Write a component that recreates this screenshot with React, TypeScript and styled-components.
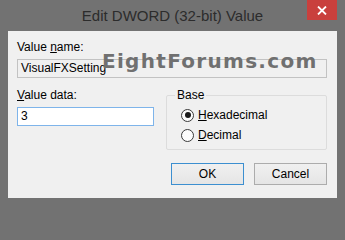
import * as React from "react";
import styled, { createGlobalStyle } from "styled-components";

const GlobalStyle = createGlobalStyle`
  html, body {
    margin: 0;
    padding: 0;
    background: #727272;
  }
  body {
    font-family: "Liberation Sans", Arial, sans-serif;
  }
`;

const App: React.FunctionComponent = () => {
  return <Window>
      <GlobalStyle />
      <TitleBar>
        <span />
        <Title>Edit DWORD (32-bit) Value</Title>
        <CloseButton>
          <svg width="10" height="9" viewBox="0 0 10 9">
            <path d="M1 0.5 L9 8.5 M9 0.5 L1 8.5" stroke="#fff" strokeWidth="1.8" />
          </svg>
        </CloseButton>
      </TitleBar>
      <Content>
        <Label>Value <u>n</u>ame:</Label>
        <TextBox readOnly>VisualFXSetting</TextBox>
        <LowerRow>
          <DataColumn>
            <Label><u>V</u>alue data:</Label>
            <TextBox focused>3</TextBox>
          </DataColumn>
          <GroupBox>
            <Legend>Base</Legend>
            <RadioRow>
              <RadioCircle checked />
              <span><u>H</u>exadecimal</span>
            </RadioRow>
            <RadioRow>
              <RadioCircle />
              <span><u>D</u>ecimal</span>
            </RadioRow>
          </GroupBox>
        </LowerRow>
        <ButtonBar>
          <Button isDefault>OK</Button>
          <Button>Cancel</Button>
        </ButtonBar>
      </Content>
      <Watermark>EightForums.com</Watermark>
    </Window>;
};

const Window = styled.div`
  position: relative;
  width: 345px;
  height: 206px;
  background: #727272;
  display: flex;
  flex-direction: column;
  overflow: hidden;
`;

const TitleBar = styled.div`
  height: 31px;
  display: grid;
  grid-template-columns: 1fr auto 1fr;
  padding-right: 8px;
`;

const Title = styled.div`
  align-self: center;
  font-size: 15px;
  color: #2c2c2c;
  margin-left: 8px;
`;

const CloseButton = styled.div`
  justify-self: end;
  width: 30px;
  height: 20px;
  background: #c9403d;
  display: flex;
  align-items: center;
  justify-content: center;
`;

const Content = styled.div`
  margin: 0 8px;
  height: 167px;
  box-sizing: border-box;
  background: #f0f0f0;
  padding: 9px 10px 0 9px;
  display: flex;
  flex-direction: column;
  font-size: 12px;
  color: #000;
`;

const Label = styled.div`
  line-height: 15px;
  height: 15px;
  margin-bottom: 4px;
`;

const TextBox = styled.div<{readOnly?: boolean; focused?: boolean}>`
  height: 19px;
  box-sizing: border-box;
  border: 1px solid ${p => p.focused ? "#7eb4ea" : "#c2c2c2"};
  background: ${p => p.readOnly ? "#f0f0f0" : "#ffffff"};
  padding: 0 3px;
  line-height: 17px;
`;

const LowerRow = styled.div`
  display: grid;
  grid-template-columns: 137px 161px;
  column-gap: 12px;
  margin-top: 10px;
  height: 62px;
`;

const DataColumn = styled.div`
  display: flex;
  flex-direction: column;
`;

const GroupBox = styled.fieldset`
  margin: 0;
  padding: 2px 8px 0 14px;
  border: 1px solid #dcdcdc;
  border-radius: 2px;
  min-width: 0;
  box-sizing: border-box;
  height: 62px;
`;

const Legend = styled.legend`
  padding: 0 2px;
  margin-left: -6px;
  line-height: 15px;
`;

const RadioRow = styled.div`
  display: flex;
  align-items: center;
  gap: 4px;
  height: 20px;
`;

const RadioCircle = styled.span<{checked?: boolean}>`
  width: 13px;
  height: 13px;
  box-sizing: border-box;
  border-radius: 50%;
  border: 1px solid #3a3a3a;
  background: #fcfcfc;
  display: flex;
  align-items: center;
  justify-content: center;
  &::after {
    content: "";
    width: 6px;
    height: 6px;
    border-radius: 50%;
    background: ${p => p.checked ? "#1a1a1a" : "transparent"};
  }
`;

const ButtonBar = styled.div`
  display: flex;
  justify-content: flex-end;
  gap: 10px;
  margin-top: 13px;
`;

const Button = styled.div<{isDefault?: boolean}>`
  width: 73px;
  height: 22px;
  box-sizing: border-box;
  border: 1px solid ${p => p.isDefault ? "#3c8fd0" : "#acacac"};
  background: linear-gradient(#f0f0f0, #e5e5e5);
  display: flex;
  align-items: center;
  justify-content: center;
`;

const Watermark = styled.div`
  position: absolute;
  left: 102px;
  top: 51px;
  line-height: 20px;
  font-family: "DejaVu Sans", Verdana, sans-serif;
  font-weight: bold;
  font-size: 20px;
  letter-spacing: 1.3px;
  color: #707070;
`;

export default App;
